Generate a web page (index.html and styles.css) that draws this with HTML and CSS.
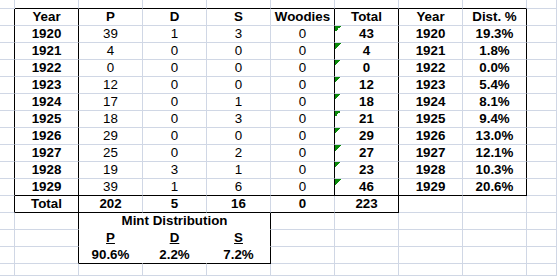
FILE: index.html
```html
<!DOCTYPE html>
<html>
<head>
<meta charset="utf-8">
<link rel="stylesheet" href="styles.css">
</head>
<body>
<div class="sheet">
  <!-- row 0 -->
  <div class="c"></div><div class="c bb"></div><div class="c bb"></div><div class="c bb"></div><div class="c bb"></div><div class="c bb"></div><div class="c bb"></div><div class="c bb"></div><div class="c bb"></div><div class="c"></div>
  <!-- header -->
  <div class="c br"></div><div class="c b br">Year</div><div class="c b">P</div><div class="c b">D</div><div class="c b">S</div><div class="c b br">Woodies</div><div class="c b br">Total</div><div class="c b">Year</div><div class="c b br">Dist. %</div><div class="c"></div>
  <!-- 1920 -->
  <div class="c br"></div><div class="c b br">1920</div><div class="c">39</div><div class="c">1</div><div class="c">3</div><div class="c br">0</div><div class="c b br tri">43</div><div class="c b">1920</div><div class="c b br">19.3%</div><div class="c"></div>
  <!-- 1921 -->
  <div class="c br"></div><div class="c b br">1921</div><div class="c">4</div><div class="c">0</div><div class="c">0</div><div class="c br">0</div><div class="c b br tri">4</div><div class="c b">1921</div><div class="c b br">1.8%</div><div class="c"></div>
  <!-- 1922 -->
  <div class="c br"></div><div class="c b br">1922</div><div class="c">0</div><div class="c">0</div><div class="c">0</div><div class="c br">0</div><div class="c b br tri">0</div><div class="c b">1922</div><div class="c b br">0.0%</div><div class="c"></div>
  <!-- 1923 -->
  <div class="c br"></div><div class="c b br">1923</div><div class="c">12</div><div class="c">0</div><div class="c">0</div><div class="c br">0</div><div class="c b br tri">12</div><div class="c b">1923</div><div class="c b br">5.4%</div><div class="c"></div>
  <!-- 1924 -->
  <div class="c br"></div><div class="c b br">1924</div><div class="c">17</div><div class="c">0</div><div class="c">1</div><div class="c br">0</div><div class="c b br tri">18</div><div class="c b">1924</div><div class="c b br">8.1%</div><div class="c"></div>
  <!-- 1925 -->
  <div class="c br"></div><div class="c b br">1925</div><div class="c">18</div><div class="c">0</div><div class="c">3</div><div class="c br">0</div><div class="c b br tri">21</div><div class="c b">1925</div><div class="c b br">9.4%</div><div class="c"></div>
  <!-- 1926 -->
  <div class="c br"></div><div class="c b br">1926</div><div class="c">29</div><div class="c">0</div><div class="c">0</div><div class="c br">0</div><div class="c b br tri">29</div><div class="c b">1926</div><div class="c b br">13.0%</div><div class="c"></div>
  <!-- 1927 -->
  <div class="c br"></div><div class="c b br">1927</div><div class="c">25</div><div class="c">0</div><div class="c">2</div><div class="c br">0</div><div class="c b br tri">27</div><div class="c b">1927</div><div class="c b br">12.1%</div><div class="c"></div>
  <!-- 1928 -->
  <div class="c br"></div><div class="c b br">1928</div><div class="c">19</div><div class="c">3</div><div class="c">1</div><div class="c br">0</div><div class="c b br tri">23</div><div class="c b">1928</div><div class="c b br">10.3%</div><div class="c"></div>
  <!-- 1929 -->
  <div class="c br"></div><div class="c b br bb">1929</div><div class="c bb">39</div><div class="c bb">1</div><div class="c bb">6</div><div class="c br bb">0</div><div class="c b br bb tri">46</div><div class="c b bb">1929</div><div class="c b br bb">20.6%</div><div class="c"></div>
  <!-- Total -->
  <div class="c br"></div><div class="c b br bb">Total</div><div class="c b bb">202</div><div class="c b bb">5</div><div class="c b bb">16</div><div class="c b bb">0</div><div class="c b br bb">223</div><div class="c"></div><div class="c"></div><div class="c"></div>
  <!-- Mint Distribution -->
  <div class="c"></div><div class="c br"></div><div class="c b br nb span3">Mint Distribution</div><div class="c"></div><div class="c"></div><div class="c"></div><div class="c"></div><div class="c"></div>
  <!-- P D S -->
  <div class="c"></div><div class="c br"></div><div class="c b nr nb"><span class="u">P</span></div><div class="c b nr nb"><span class="u">D</span></div><div class="c b br nb"><span class="u">S</span></div><div class="c"></div><div class="c"></div><div class="c"></div><div class="c"></div><div class="c"></div>
  <!-- percentages -->
  <div class="c"></div><div class="c br"></div><div class="c b nr bb">90.6%</div><div class="c b nr bb">2.2%</div><div class="c b br bb">7.2%</div><div class="c"></div><div class="c"></div><div class="c"></div><div class="c"></div><div class="c"></div>
  <!-- last row -->
  <div class="c"></div><div class="c"></div><div class="c"></div><div class="c"></div><div class="c"></div><div class="c"></div><div class="c"></div><div class="c"></div><div class="c"></div><div class="c"></div>
</div>
</body>
</html>
```

FILE: styles.css
```css
html, body {
  margin: 0;
  padding: 0;
  background: #ffffff;
  overflow: hidden;
}

.sheet {
  display: grid;
  grid-template-columns: 15px repeat(8, 64px) 30px;
  grid-template-rows: 9px repeat(15, 17px) 12px;
  width: 557px;
  height: 276px;
  overflow: hidden;
  font-family: "Liberation Sans", Arial, sans-serif;
  font-size: 13.33px;
  color: #000000;
}

.c {
  box-sizing: border-box;
  border-right: 1px solid #d0d7e5;
  border-bottom: 1px solid #d0d7e5;
  line-height: 16px;
  text-align: center;
  white-space: nowrap;
  overflow: hidden;
  background: #ffffff;
}

.b { font-weight: bold; }
.br { border-right-color: #000000; }
.bb { border-bottom-color: #000000; }
.nr { border-right-color: #ffffff; }
.nb { border-bottom-color: #ffffff; }
.span3 { grid-column: span 3; }
.u { text-decoration: underline; }

.tri {
  background: linear-gradient(135deg, #0a8a0a 50%, transparent 50%) no-repeat 0 0 / 6px 6px;
}
```
